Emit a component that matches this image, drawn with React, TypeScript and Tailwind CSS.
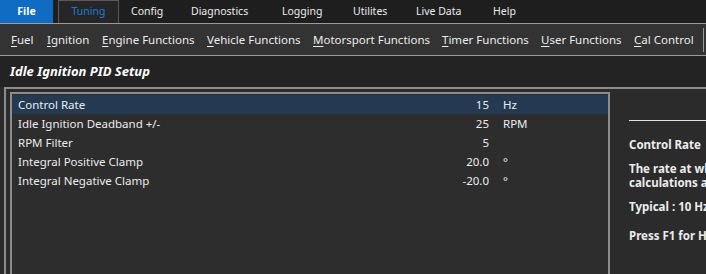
import { ReactNode } from 'react';

const topMenu: [string, string][] = [
  ['Config', 'w-[60px]'],
  ['Diagnostics', 'w-[91px]'],
  ['Logging', 'w-[71px]'],
  ['Utilites', 'w-[63px]'],
  ['Live Data', 'w-[77px]'],
  ['Help', 'w-[60px]'],
];

const subMenu: [string, string, string][] = [
  ['F', 'uel', 'w-[36px]'],
  ['I', 'gnition', 'w-[55px]'],
  ['E', 'ngine Functions', 'w-[105px]'],
  ['V', 'ehicle Functions', 'w-[106px]'],
  ['M', 'otorsport Functions', 'w-[129px]'],
  ['T', 'imer Functions', 'w-[99px]'],
  ['U', 'ser Functions', 'w-[93px]'],
  ['C', 'al Control', 'w-[66px]'],
];

interface Param {
  name: string;
  value: string;
  unit?: string;
}

const params: Param[] = [
  { name: 'Control Rate', value: '15', unit: 'Hz' },
  { name: 'Idle Ignition Deadband +/-', value: '25', unit: 'RPM' },
  { name: 'RPM Filter', value: '5' },
  { name: 'Integral Positive Clamp', value: '20.0', unit: '°' },
  { name: 'Integral Negative Clamp', value: '-20.0', unit: '°' },
];

function HelpLine({ children }: { children: ReactNode }) {
  return <p className="whitespace-nowrap">{children}</p>;
}

export default function App() {
  return (
    <div className="w-[706px] h-[274px] overflow-hidden bg-[#2b2b2b] text-[11.5px] text-[#ececec] font-['Noto_Sans',sans-serif] flex flex-col">
      {/* Главное меню */}
      <div className="h-[23px] shrink-0 bg-[#1e1e1e] flex items-end text-[10.5px]">
        <div className="h-[23px] w-[53px] bg-[#0f6cc2] text-white font-bold flex items-center justify-center">File</div>
        <div className="ml-[5px] h-[23px] w-[61px] border border-b-0 border-[#5a5a5a] bg-[#262626] text-[#1c7ad6] flex items-center justify-center">
          Tuning
        </div>
        <div className="flex h-[23px] items-center pl-[12px]">
          {topMenu.map(([m, w]) => (
            <span key={m} className={`${w} whitespace-nowrap`}>
              {m}
            </span>
          ))}
        </div>
      </div>

      {/* Подменю */}
      <div className="h-[33px] shrink-0 bg-[#333333] border-t border-b border-[#9a9a9a] flex items-center pl-[11px]">
        {subMenu.map(([u, rest, w]) => (
          <span key={u + rest} className={`${w} shrink-0 whitespace-nowrap`}>
            <span className="underline underline-offset-2">{u}</span>
            {rest}
          </span>
        ))}
        <div className="ml-auto mr-[2px] w-px h-[24px] bg-[#9a9a9a]" />
      </div>

      {/* Заголовок */}
      <div className="h-[31px] shrink-0 bg-[#232323] flex items-center pl-[10px] font-bold italic text-[13px] text-white">
        Idle Ignition PID Setup
      </div>

      {/* Панель параметров */}
      <div className="flex-1 border-t-2 border-l-2 border-[#8c8c8c] ml-[4px] flex">
        <div className="w-[600px] ml-[4px] mt-[3px] border-t-2 border-l-2 border-r-2 border-[#8c8c8c] bg-[#2d2d2d] pt-[1px]">
          {params.map((p, i) => (
            <div
              key={p.name}
              className={`h-[19px] flex items-center ${i === 0 ? 'bg-[#243a52]' : ''}`}
            >
              <span className="pl-[6px] w-[380px] whitespace-nowrap">{p.name}</span>
              <span className="w-[97px] text-right">{p.value}</span>
              <span className="ml-[14px]">{p.unit}</span>
            </div>
          ))}
        </div>

        {/* Справка */}
        <div className="flex-1 pl-[19px] pt-[31px] overflow-hidden font-bold">
          <div className="h-px bg-[#e0e0e0] mb-[17px]" />
          <div className="flex flex-col gap-[10px] leading-[14px]">
            <HelpLine>Control Rate</HelpLine>
            <div>
              <HelpLine>The rate at which the PID</HelpLine>
              <HelpLine>calculations are performed</HelpLine>
            </div>
            <HelpLine>Typical : 10 Hz</HelpLine>
            <div className="mt-[5px]">
              <HelpLine>Press F1 for Help</HelpLine>
            </div>
          </div>
        </div>
      </div>
    </div>
  );
}
